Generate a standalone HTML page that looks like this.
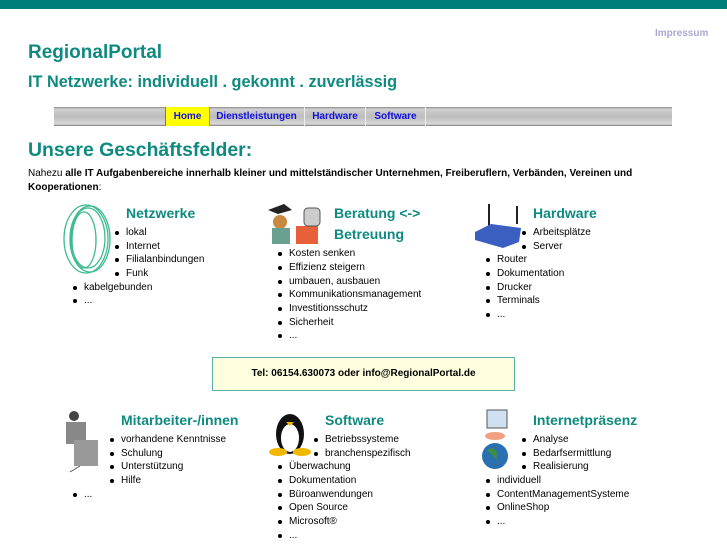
<!DOCTYPE html>
<html><head><meta charset="utf-8"><style>
body{margin:0;width:727px;height:545px;background:#fff;position:relative;overflow:hidden;font-family:"Liberation Sans",sans-serif;}
.a{position:absolute;white-space:nowrap;}
.t{font-size:10px;line-height:12px;color:#000;}
.t.b:before{content:"";position:absolute;left:-11px;top:4px;width:4px;height:4px;border-radius:50%;background:#000;}
.h{color:#0e8a80;font-weight:bold;font-size:14px;line-height:16px;}
.nav{font-size:10px;font-weight:bold;color:#1010e0;line-height:20px;text-align:center;}
</style></head><body>
<div class="a" style="left:0;top:0;width:727px;height:9px;background:#007f7a"></div>
<div class="a" style="left:655px;top:28px;font-size:10px;font-weight:bold;color:#a8a8d0">Impressum</div>
<div class="a h" style="left:28px;top:42px;font-size:19px;line-height:21px">RegionalPortal</div>
<div class="a h" style="left:28px;top:73px;font-size:16.3px;line-height:18px">IT Netzwerke: individuell . gekonnt . zuverlässig</div>
<div class="a" style="left:54px;top:107px;width:618px;height:19px;background:linear-gradient(#8a8a8a 0,#cfcfcf 2px,#bdbdbd 50%,#d8d8d8 90%,#777 100%)"></div>
<div class="a nav" style="left:165px;top:107px;width:43px;height:19px;background:#ffff00;border-left:1px solid #777;border-right:1px solid #999">Home</div>
<div class="a nav" style="left:209px;top:107px;width:95px;border-right:1px solid #eee">Dienstleistungen</div>
<div class="a nav" style="left:305px;top:107px;width:60px;border-right:1px solid #eee">Hardware</div>
<div class="a nav" style="left:366px;top:107px;width:59px;border-right:1px solid #eee">Software</div>
<div class="a h" style="left:28px;top:140px;font-size:19.4px;line-height:21px">Unsere Geschäftsfelder:</div>
<div class="a t" style="left:28px;top:167px;line-height:14px">Nahezu <b>alle IT Aufgabenbereiche innerhalb kleiner und mittelständischer Unternehmen, Freiberuflern, Verbänden, Vereinen und</b><br><b>Kooperationen</b>:</div>

<svg class="a" style="left:60px;top:202px" width="56" height="74"><g fill="none" stroke="#3cba90" stroke-width="1.3"><ellipse cx="26" cy="37" rx="22" ry="34"/><ellipse cx="28" cy="36" rx="17" ry="30"/><ellipse cx="24" cy="38" rx="12" ry="28"/><ellipse cx="30" cy="37" rx="20" ry="33"/></g></svg>
<svg class="a" style="left:266px;top:202px" width="56" height="44"><rect x="30" y="24" width="22" height="18" fill="#e8603a"/><rect x="38" y="6" width="16" height="18" rx="4" fill="#ccc" stroke="#555"/><circle cx="14" cy="20" r="7" fill="#c88840"/><rect x="6" y="26" width="18" height="16" fill="#6aa090"/><polygon points="2,8 18,2 26,8 12,12" fill="#222"/></svg>
<svg class="a" style="left:473px;top:202px" width="50" height="46"><line x1="16" y1="2" x2="16" y2="24" stroke="#222" stroke-width="2"/><line x1="44" y1="4" x2="44" y2="22" stroke="#222" stroke-width="2"/><polygon points="2,30 18,22 48,26 46,40 30,46 2,38" fill="#3a5fc0"/></svg>
<svg class="a" style="left:60px;top:408px" width="50" height="66"><circle cx="14" cy="8" r="5" fill="#444"/><rect x="6" y="14" width="20" height="22" fill="#888"/><rect x="14" y="32" width="24" height="26" fill="#999"/><line x1="20" y1="58" x2="10" y2="64" stroke="#555"/></svg>
<svg class="a" style="left:266px;top:408px" width="50" height="48"><ellipse cx="24" cy="26" rx="14" ry="20" fill="#111"/><ellipse cx="24" cy="30" rx="9" ry="14" fill="#fff"/><ellipse cx="12" cy="44" rx="9" ry="4" fill="#f0b800"/><ellipse cx="36" cy="44" rx="9" ry="4" fill="#f0b800"/><polygon points="20,14 28,14 24,18" fill="#f0b800"/></svg>
<svg class="a" style="left:473px;top:408px" width="50" height="64"><rect x="14" y="2" width="20" height="18" fill="#cfe0f0" stroke="#555"/><ellipse cx="22" cy="28" rx="10" ry="4" fill="#f0a080"/><circle cx="22" cy="48" r="13" fill="#2a70b0"/><path d="M14 42 q6 -4 10 2 q-2 8 4 12" fill="#3a9040"/></svg>

<div class="a h" style="left:126px;top:205px">Netzwerke</div>
<div class="a t b" style="left:126px;top:227px">lokal</div>
<div class="a t b" style="left:126px;top:241px">Internet</div>
<div class="a t b" style="left:126px;top:254px">Filialanbindungen</div>
<div class="a t b" style="left:126px;top:268px">Funk</div>
<div class="a t b" style="left:84px;top:282px">kabelgebunden</div>
<div class="a t b" style="left:84px;top:295px">...</div>

<div class="a h" style="left:334px;top:205px">Beratung &lt;-&gt;</div>
<div class="a h" style="left:334px;top:226px">Betreuung</div>
<div class="a t b" style="left:289px;top:248px">Kosten senken</div>
<div class="a t b" style="left:289px;top:262px">Effizienz steigern</div>
<div class="a t b" style="left:289px;top:276px">umbauen, ausbauen</div>
<div class="a t b" style="left:289px;top:289px">Kommunikationsmanagement</div>
<div class="a t b" style="left:289px;top:303px">Investitionsschutz</div>
<div class="a t b" style="left:289px;top:317px">Sicherheit</div>
<div class="a t b" style="left:289px;top:330px">...</div>

<div class="a h" style="left:533px;top:205px">Hardware</div>
<div class="a t b" style="left:533px;top:227px">Arbeitsplätze</div>
<div class="a t b" style="left:533px;top:241px">Server</div>
<div class="a t b" style="left:497px;top:254px">Router</div>
<div class="a t b" style="left:497px;top:268px">Dokumentation</div>
<div class="a t b" style="left:497px;top:282px">Drucker</div>
<div class="a t b" style="left:497px;top:295px">Terminals</div>
<div class="a t b" style="left:497px;top:309px">...</div>

<div class="a" style="left:212px;top:357px;width:301px;height:32px;background:#ffffe0;border:1px solid #5ab0a8;font-size:10px;font-weight:bold;line-height:32px;text-align:center">Tel: 06154.630073 oder info@RegionalPortal.de</div>

<div class="a h" style="left:121px;top:412px">Mitarbeiter-/innen</div>
<div class="a t b" style="left:121px;top:434px">vorhandene Kenntnisse</div>
<div class="a t b" style="left:121px;top:448px">Schulung</div>
<div class="a t b" style="left:121px;top:461px">Unterstützung</div>
<div class="a t b" style="left:121px;top:475px">Hilfe</div>
<div class="a t b" style="left:84px;top:489px">...</div>

<div class="a h" style="left:325px;top:412px">Software</div>
<div class="a t b" style="left:325px;top:434px">Betriebssysteme</div>
<div class="a t b" style="left:325px;top:448px">branchenspezifisch</div>
<div class="a t b" style="left:289px;top:461px">Überwachung</div>
<div class="a t b" style="left:289px;top:475px">Dokumentation</div>
<div class="a t b" style="left:289px;top:489px">Büroanwendungen</div>
<div class="a t b" style="left:289px;top:502px">Open Source</div>
<div class="a t b" style="left:289px;top:516px">Microsoft®</div>
<div class="a t b" style="left:289px;top:530px">...</div>

<div class="a h" style="left:533px;top:412px">Internetpräsenz</div>
<div class="a t b" style="left:533px;top:434px">Analyse</div>
<div class="a t b" style="left:533px;top:448px">Bedarfsermittlung</div>
<div class="a t b" style="left:533px;top:461px">Realisierung</div>
<div class="a t b" style="left:497px;top:475px">individuell</div>
<div class="a t b" style="left:497px;top:489px">ContentManagementSysteme</div>
<div class="a t b" style="left:497px;top:502px">OnlineShop</div>
<div class="a t b" style="left:497px;top:516px">...</div>
</body></html>
